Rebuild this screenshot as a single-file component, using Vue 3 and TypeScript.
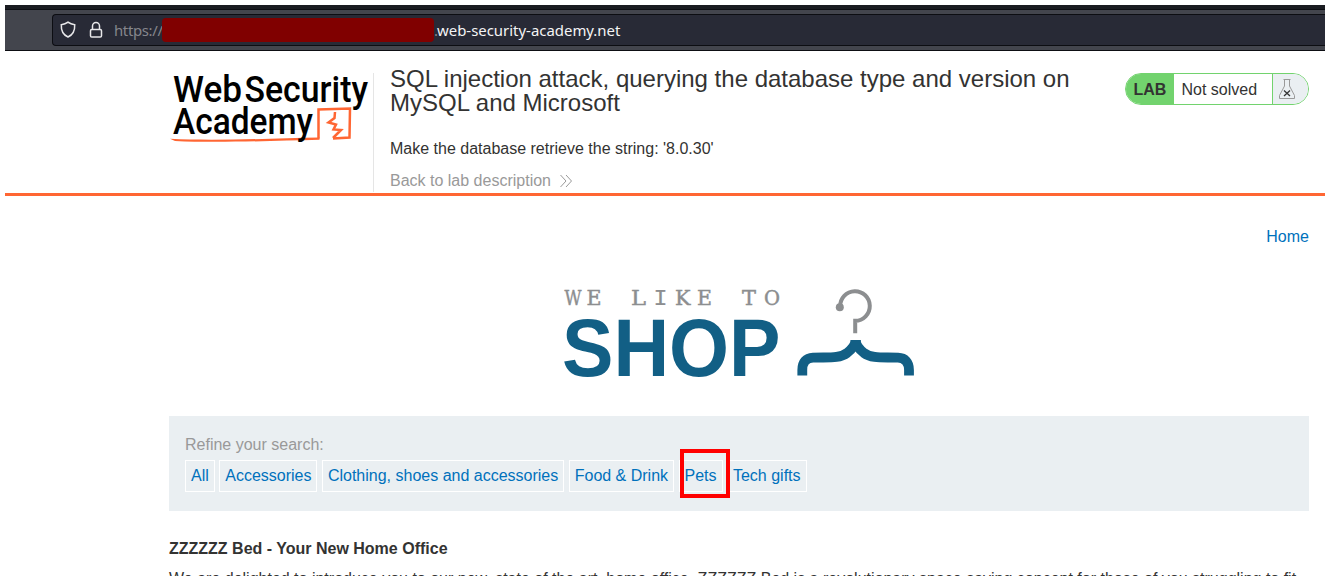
<script setup lang="ts">
interface Letter {
  char: string
  x: number
  width: number
}

const tagline: Letter[] = [
  { char: 'W', x: 0.5, width: 17 },
  { char: 'E', x: 22.5, width: 15 },
  { char: 'L', x: 67, width: 15 },
  { char: 'I', x: 89.5, width: 14 },
  { char: 'K', x: 111, width: 15.5 },
  { char: 'E', x: 133, width: 15 },
  { char: 'T', x: 178, width: 14 },
  { char: 'O', x: 200, width: 16 },
]

const categories: string[] = [
  'All',
  'Accessories',
  'Clothing, shoes and accessories',
  'Food & Drink',
  'Pets',
  'Tech gifts',
]
</script>

<template>
  <div class="window">
    <div class="toolbar">
      <div class="address">
        <svg class="shield" width="16" height="18" viewBox="0 0 16 18">
          <path d="M8 1.2C6 2.8 3.8 3.5 1.3 3.7C1 9.500 3.200 13.800 8 16C12.800 13.800 15 9.500 14.700 3.700C12.200 3.500 10 2.800 8 1.200Z" />
        </svg>
        <svg class="lock" width="14" height="18" viewBox="0 0 14 18">
          <path d="M3.500 8V5A3.500 3.500 0 0 1 10.500 5V8" />
          <rect x="1.500" y="8.500" width="11" height="7.500" rx="1.300" />
        </svg>
        <span class="scheme">https://</span>
        <span class="redacted"></span>
        <span class="dot">.</span><span class="host">web-security-academy.net</span>
      </div>
    </div>

    <header class="lab-header">
      <svg class="academy" width="204" height="80" viewBox="0 0 204 80">
        <g class="academy-text">
          <text x="8" y="34.500" textLength="69" lengthAdjust="spacingAndGlyphs">Web</text>
          <text x="79.500" y="34.500" textLength="123.500" lengthAdjust="spacingAndGlyphs">Security</text>
        </g>
        <path class="underline" d="M153.500 71.500V42.500L185 41.500L184.500 70.500L168 71.500" />
        <path class="swash" d="M5 71.800C50 74 105 71.500 154.500 70.500V72.800C105 74 50 76 10 74Z" />
        <text class="academy-text" x="8" y="67" textLength="140" lengthAdjust="spacingAndGlyphs">Academy</text>
        <path class="bolt" d="M170 45L169.500 51L163.500 55.500L171 57.500L168.500 62.500L176 63L168 71" />
      </svg>
      <div class="lab-title">
        <h2>SQL injection attack, querying the database type and version on MySQL and Microsoft</h2>
        <p>Make the database retrieve the string: '8.0.30'</p>
        <a class="back">Back to lab description
          <svg width="12" height="14" viewBox="0 0 12 14"><path d="M.5 1L6 7L.5 13M6 1L11.500 7L6 13" /></svg>
        </a>
      </div>
      <div class="status">
        <strong>LAB</strong>
        <span>Not solved</span>
        <i>
          <svg width="18" height="22" viewBox="0 0 18 22">
            <path class="flask" d="M5.500 1.500H12.500M6.500 1.500V8L1.500 17.500V20.500H16.500V17.500L11.500 8V1.500" />
            <path class="cross" d="M6 12.500L12 18M12 12.500L6 18" />
          </svg>
        </i>
      </div>
    </header>

    <main>
      <nav><a>Home</a></nav>
      <svg class="shop-logo" width="352" height="92" viewBox="0 0 352 92">
        <text
          v-for="letter in tagline"
          :key="letter.x"
          class="tagline"
          :class="{ mono: letter.char === 'I' }"
          :x="letter.x"
          y="18.500"
          :textLength="letter.width"
          lengthAdjust="spacingAndGlyphs"
        >{{ letter.char }}</text>
        <text class="shop" x="-2" y="89.500" textLength="218.500" lengthAdjust="spacingAndGlyphs">SHOP</text>
        <circle cx="275.800" cy="21.200" r="4" fill="#8c8e90" />
        <path class="hook" d="M276.200 20.500A14.800 14.800 0 1 1 291.200 34.800V47.200" />
        <path class="hanger" d="M238.300 89.500V84C238.300 76 242 72 249 71.700C263 71 275 73 283 67C288 63 291.600 58 291.600 54C291.600 58 295 63 300 67C308 73 320 71 334 71.700C341 72 345 76 345 84V89.500" />
        <path fill="#125f85" d="M286.700 54H296.700V62H286.700Z" />
      </svg>

      <section class="filters">
        <label>Refine your search:</label>
        <div class="options">
          <a v-for="category in categories" :key="category" :class="{ marked: category === 'Pets' }">{{ category }}</a>
        </div>
      </section>

      <h3>ZZZZZZ Bed - Your New Home Office</h3>
      <p class="description">We are delighted to introduce you to our new, state of the art, home office. ZZZZZZ Bed is a revolutionary space saving concept for those of you struggling to fit</p>
    </main>
  </div>
</template>

<style>
html,
body {
  margin: 0;
  background: #fff;
  overflow: hidden;
}
</style>

<style scoped>
.window {
  box-sizing: border-box;
  width: 1320px;
  height: 571px;
  margin: 5px;
  overflow: hidden;
  color: #333332;
  font: 16px/24px 'Liberation Sans', Arial, sans-serif;
}
.toolbar {
  box-sizing: border-box;
  height: 46px;
  padding: 4px 0 0 47px;
  background: #43454d;
  border-top: 4px solid #1a1c21;
  border-bottom: 1px solid #0d0e13;
  box-shadow: inset 0 1px #0d0e13;
  padding-top: 5px;
}
.address {
  box-sizing: border-box;
  display: flex;
  align-items: center;
  height: 32px;
  border: 1px solid #0c0d12;
  border-right: 0;
  border-radius: 4px 0 0 4px;
  background: #282a36;
  font: 14.930px/30px 'Noto Sans', sans-serif;
  white-space: nowrap;
}
.address svg {
  flex: none;
  fill: none;
  stroke: #e8e8ea;
  stroke-width: 1.5;
}
.shield { margin-left: 7px; }
.lock { margin-left: 13px; }
.scheme {
  width: 48px;
  margin-left: 11px;
  color: #85868c;
  letter-spacing: -0.35px;
}
.redacted {
  position: relative;
  width: 272px;
  height: 24px;
  margin-top: -1px;
  border-radius: 4px;
  background: #800000;
}
.dot { color: #85868c; width: 3px; }
.host { color: #f4f4f5; }
.lab-header {
  box-sizing: border-box;
  display: flex;
  align-items: flex-start;
  height: 145px;
  padding: 16px 16px 0 160px;
  border-bottom: 3px solid #ff6633;
}
.academy {
  flex: none;
  margin-right: 4px;
}
.academy-text {
  fill: #000;
  font: 500 37px Roboto, sans-serif;
}
.underline,
.bolt {
  fill: none;
  stroke: #ff6633;
  stroke-width: 2.5;
}
.swash { fill: #ff6633; }
.lab-title {
  box-sizing: border-box;
  width: 700px;
  height: 119px;
  margin-top: 6px;
  padding-left: 16px;
  border-left: 1px solid #e5e5e5;
}
h2 {
  margin: -6px 0 0;
  font-size: 24px;
  line-height: 24px;
  font-weight: 400;
}
.lab-title p { margin: 22px 0 8px; }
.back {
  display: flex;
  align-items: center;
  gap: 9px;
  color: #999;
}
.back svg {
  fill: none;
  stroke: #999;
}
.status {
  box-sizing: border-box;
  display: flex;
  width: 184px;
  height: 32px;
  margin: 6px 0 0 auto;
  overflow: hidden;
  border: 1px solid #72d36e;
  border-radius: 16px;
  line-height: 32px;
}
.status strong {
  width: 48px;
  background: #72d36e;
  text-indent: 7.5px;
}
.status span {
  width: 98px;
  text-indent: 7.5px;
}
.status i {
  flex: 1;
  border-left: 1px solid #72d36e;
  background: #eaeff2;
}
.status svg {
  display: block;
  margin: 4px 0 0 5px;
  fill: none;
}
.flask { stroke: #999; }
.cross { stroke: #333; stroke-width: 1.3; }
main {
  width: 1140px;
  padding: 29px 0 0 164px;
}
nav {
  height: 24px;
  text-align: right;
}
a { color: #0071bc; }
.shop-logo {
  display: block;
  margin: 37px 0 0 395px;
  overflow: visible;
}
.tagline {
  fill: #8c8e90;
  stroke: #8c8e90;
  stroke-width: 0.45;
  font: 20.500px 'DejaVu Serif', serif;
}
.tagline.mono {
  stroke-width: 0.2;
  font: 22.500px 'Liberation Mono', monospace;
}
.shop {
  fill: #125f85;
  font: bold 81px 'Liberation Sans', Arial, sans-serif;
}
.hook {
  fill: none;
  stroke: #8c8e90;
  stroke-width: 4;
}
.hanger {
  fill: none;
  stroke: #125f85;
  stroke-width: 9.800;
}
.filters {
  box-sizing: border-box;
  height: 95px;
  margin-top: 38px;
  padding: 17px 16px 0;
  background: #eaeff2;
}
.filters label {
  display: block;
  height: 27px;
  color: #999;
}
.options {
  display: flex;
  gap: 4.450px;
}
.options a {
  position: relative;
  padding: 0 5px;
  border: 1px solid #fff;
  line-height: 30px;
}
.options .marked { z-index: 1; }
.marked::after {
  content: '';
  position: absolute;
  top: -12px;
  left: 0;
  width: 42px;
  height: 41px;
  border: 4px solid #f00;
}
h3 {
  margin: 26px 0 0;
  font-size: 16px;
  line-height: 24px;
}
.description {
  margin: 6px 0 0;
  white-space: nowrap;
}
</style>
